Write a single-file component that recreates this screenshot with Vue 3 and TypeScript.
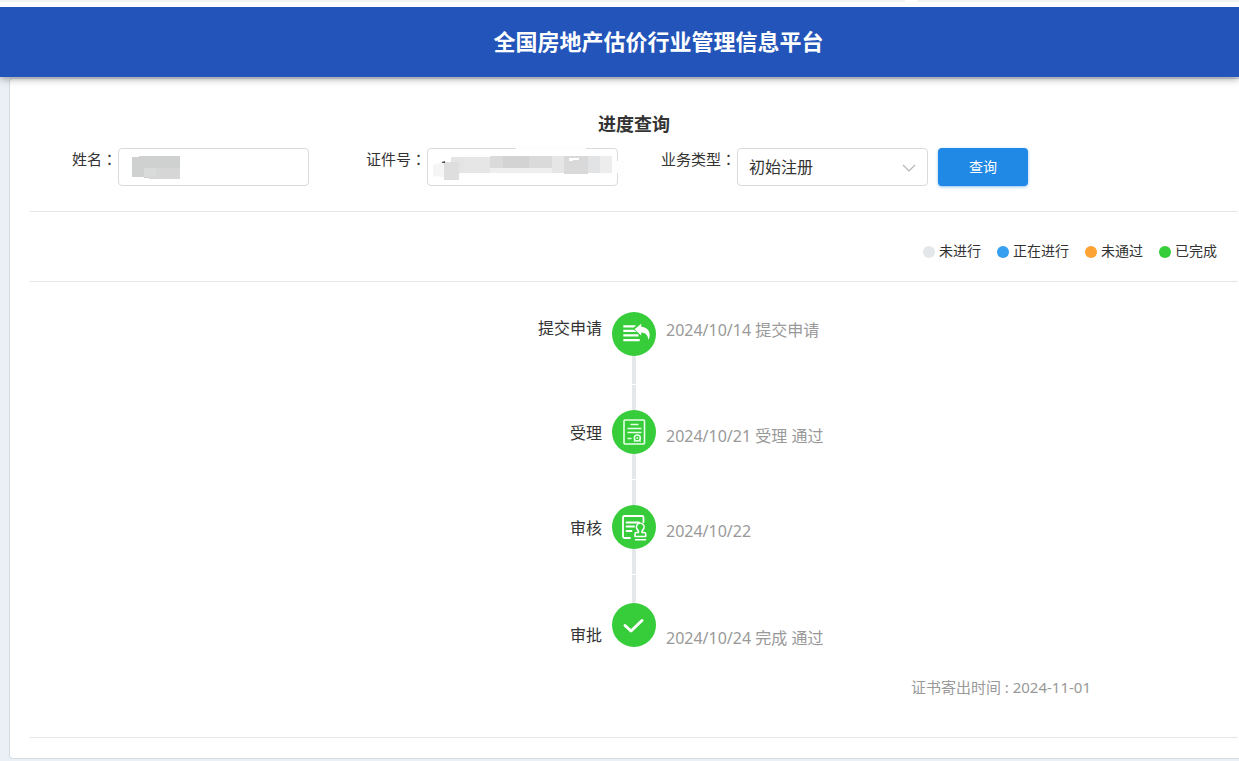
<script setup lang="ts">
import { ref } from 'vue'

interface Step {
  label: string
  result: string
  icon: 'submit' | 'accept' | 'review' | 'approve'
}

const businessType = ref('初始注册')

const legend = [
  { text: '未进行', kind: 'idle' },
  { text: '正在进行', kind: 'active' },
  { text: '未通过', kind: 'failed' },
  { text: '已完成', kind: 'done' },
]

const steps: Step[] = [
  { label: '提交申请', result: '2024/10/14 提交申请', icon: 'submit' },
  { label: '受理', result: '2024/10/21 受理 通过', icon: 'accept' },
  { label: '审核', result: '2024/10/22', icon: 'review' },
  { label: '审批', result: '2024/10/24 完成 通过', icon: 'approve' },
]
</script>

<template>
  <div class="page">
    <div class="strip"><span class="strip-main"></span><span class="strip-rest"></span></div>
    <header class="banner">
      <div class="banner-title">全国房地产估价行业管理信息平台</div>
    </header>

    <main class="card">
      <h1 class="title">进度查询</h1>

      <form class="query" @submit.prevent>
        <div class="field">
          <label for="name">姓名<span class="colon">：</span></label>
          <div class="control">
            <input id="name" type="text" autocomplete="off" />
            <svg class="mask" viewBox="0 0 191 38" aria-hidden="true">
              <path d="M14 9h7V8h41v23H31v-1h-5v-1H14z" fill="#cfd0d0" />
              <path d="M38 20h24v11H31v-2h7z" fill="#d6d6d6" />
              <path d="M26 20h12v9H26z" fill="#d9dada" />
            </svg>
          </div>
        </div>
        <div class="field">
          <label for="idno">证件号<span class="colon">：</span></label>
          <div class="control">
            <input id="idno" type="text" autocomplete="off" />
            <svg class="mask" viewBox="0 0 191 38" aria-hidden="true">
              <path d="M89-2h70v5H89zM184 13h14v12h-14z" fill="#fefefe" />
              <path d="M6 17l11-3v15l-11-1z" fill="#f5f5f5" />
              <path d="M24 9h39v16H32v7H17V14h7z" fill="#e4e4e4" />
              <path d="M17 14h15v18H17z" fill="#dedede" />
              <path d="M37 9h26v16H37z" fill="#e6e6e6" />
              <path d="M63 8h62v12H63z" fill="#dadada" />
              <path d="M76 8h26v12H76z" fill="#d3d3d3" />
              <path d="M63 20h62v5H63z" fill="#eeeeee" />
              <path d="M125 8h12v17h-12z" fill="#e6e6e6" />
              <path d="M137 8h24v18h-24z" fill="#d9d9d9" />
              <path d="M161 8h12v17h-12z" fill="#e1e3e5" />
              <path d="M173 8h12v17h-12z" fill="#ededed" />
              <path d="M142 10h10v2h-6v1h-4z" fill="#ffffff" />
              <path d="M15 14l3-1v2h-3z" fill="#4b4b4b" />
            </svg>
          </div>
        </div>
        <div class="field">
          <label for="type">业务类型<span class="colon">：</span></label>
          <div class="control">
            <select id="type" v-model="businessType">
              <option>初始注册</option>
            </select>
            <svg class="chevron" viewBox="0 0 14 8" aria-hidden="true">
              <path d="M1 1l6 6 6-6" fill="none" stroke="#b3b6bb" stroke-width="1.2" />
            </svg>
          </div>
        </div>
        <button class="search" type="submit">查询</button>
      </form>

      <ul class="legend">
        <li v-for="item in legend" :key="item.kind">
          <span class="dot" :class="item.kind"></span>{{ item.text }}
        </li>
      </ul>

      <section class="progress">
        <ol class="timeline">
          <li v-for="step in steps" :key="step.icon" class="step" :class="step.icon">
            <span class="step-label">{{ step.label }}</span>
            <span class="track">
              <span class="node">
                <svg viewBox="0 0 44 44" aria-hidden="true">
                  <g v-if="step.icon === 'submit'" fill="#fff">
                    <path d="M11.300 13.200h12.700l-2 2.300H11.300zM11.300 17.700h10.200l3.500 2.300H11.300zM11.300 22.300h15.200v2.300H11.300zM11.300 26.900h16.400v2.400H11.300z" />
                    <path d="M22.500 17.200l6.700-5.400v3c5 .2 8.500 3.500 8.500 8.200 0 1.900-.5 3.400-1.500 4.800-.2-4.700-2.700-7-7-7.200v3z" />
                  </g>
                  <g v-else-if="step.icon === 'accept'" fill="none" stroke="#e9ffe9" stroke-width="1.600">
                    <rect x="12" y="10" width="20.500" height="24" rx="1" />
                    <path d="M18.500 14.500h8M15.500 18.500h14M15.500 22.500h14M15.500 28.500h4" />
                    <circle cx="25.300" cy="28" r="3" />
                    <circle cx="25.300" cy="28" r="1" fill="#e9ffe9" stroke="none" />
                    <path d="M23 30.500l-1 1.200M27.600 30.500l1 1.200" stroke-width="1.200" />
                  </g>
                  <g v-else-if="step.icon === 'review'" fill="none" stroke="#fff" stroke-width="1.800" stroke-linecap="round" stroke-linejoin="round">
                    <path d="M31.500 17v-4.500a1.500 1.500 0 0 0-1.500-1.500H12.500a1.500 1.500 0 0 0-1.500 1.500v19a1.500 1.500 0 0 0 1.500 1.500H18" />
                    <path d="M14.500 17.500h12.500M14.500 21.500h7.500M14.500 26h5" />
                    <path d="M26.500 27.500c.2-1.300-.2-2-1-2.900a3.800 3.800 0 1 1 5.500 0c-.9.900-1.200 1.700-1 2.900h2.200a1.500 1.500 0 0 1 1.500 1.500v2.500H23v-2.500a1.500 1.500 0 0 1 1.500-1.500zM23.500 34.800h10" stroke-width="1.600" />
                  </g>
                  <path v-else d="M13 22.500l6 5.500L30 17.500" fill="none" stroke="#fff" stroke-width="3" stroke-linecap="round" stroke-linejoin="round" />
                </svg>
              </span>
            </span>
            <span class="step-result">{{ step.result }}</span>
          </li>
        </ol>
        <p class="sent">证书寄出时间 : 2024-11-01</p>
      </section>
    </main>
  </div>
</template>

<style>
body {
  margin: 0;
  background: #eaf0f6;
}
</style>

<style scoped>
.page {
  font-family: "Noto Sans", "Noto Sans CJK SC", sans-serif;
  font-size: 16px;
  color: #333;
  padding-bottom: 2px;
}
.strip {
  position: relative;
  z-index: 2;
  display: flex;
  gap: 12px;
  height: 7px;
  background: #fff;
}
.strip span {
  height: 2px;
  background: #f2f3f4;
}
.strip-main {
  flex: 905;
}
.strip-rest {
  flex: 322;
}
.banner {
  position: relative;
  z-index: 1;
  display: flex;
  align-items: center;
  justify-content: center;
  box-sizing: border-box;
  height: 70px;
  padding: 0 0 2px 78px;
  background: #2254ba;
  box-shadow: 0 1px 8px rgba(0, 0, 0, 0.45);
}
.banner-title {
  color: #fff;
  font-size: 22px;
  font-weight: 700;
  line-height: 32px;
}
.card {
  margin: 1px 0 0 9px;
  padding: 31px 1px 20px 20px;
  background: #fff;
  border: 1px solid #d5dde0;
  border-right: 0;
  border-radius: 4px 0 0 4px;
}
.title {
  margin: 0;
  font-size: 18px;
  font-weight: 700;
  line-height: 28px;
  text-align: center;
}
.query {
  display: grid;
  grid-template-columns: 279px 309px 310px auto;
  justify-content: start;
  padding: 10px 0 25px;
  border-bottom: 1px solid #e4e7e9;
}
.field {
  display: flex;
  justify-content: flex-end;
}
.field label {
  padding-right: 1px;
  font-size: 15px;
  line-height: 22px;
  white-space: nowrap;
}
.colon {
  font-family: "Noto Sans CJK TC", sans-serif;
}
.control {
  position: relative;
  width: 191px;
  height: 38px;
}
.control input,
.control select {
  box-sizing: border-box;
  width: 100%;
  height: 100%;
  margin: 0;
  padding: 0 11px;
  border: 1px solid #d9dadc;
  border-radius: 4px;
  background: #fff;
  color: #333;
  font-family: inherit;
  font-size: 16px;
  appearance: none;
}
.mask {
  position: absolute;
  inset: 0;
  overflow: visible;
  pointer-events: none;
}
.chevron {
  position: absolute;
  top: 16px;
  right: 12px;
  width: 14px;
  height: 8px;
  pointer-events: none;
}
.search {
  width: 90px;
  height: 38px;
  margin-left: 10px;
  padding: 0 0 2px;
  border: 0;
  border-radius: 4px;
  background: #2088e5;
  box-shadow: 0 1px 3px rgba(32, 136, 229, 0.5);
  color: #fff;
  font-family: inherit;
  font-size: 14px;
}
.legend {
  display: flex;
  justify-content: flex-end;
  gap: 16px;
  margin: 0;
  padding: 27px 21px 18px;
  border-bottom: 1px solid #e4e7e9;
  list-style: none;
  font-size: 14px;
  line-height: 24px;
}
.legend li {
  display: flex;
  align-items: center;
  gap: 4px;
}
.dot {
  width: 12px;
  height: 12px;
  margin-top: 1px;
  border-radius: 50%;
}
.idle { background: #e4e7e9; }
.active { background: #369ff0; }
.failed { background: #fda235; }
.done { background: #36cc3a; }
.progress {
  padding: 30px 0 38px;
  border-bottom: 1px solid #e4e7e9;
}
.timeline {
  margin: 0;
  padding: 0;
  list-style: none;
}
.step {
  display: grid;
  grid-template-columns: 1fr 44px 1fr;
  column-gap: 10px;
  line-height: 24px;
}
.step-label {
  text-align: right;
}
.step-result {
  color: #999;
}
.track {
  display: flex;
  flex-direction: column;
  align-items: center;
  padding-bottom: 1px;
}
.track::before,
.track::after {
  content: "";
  flex: 1;
  width: 4px;
  background: #e5e8eb;
}
.submit .track::before,
.approve .track::after {
  display: none;
}
.approve .track::before {
  flex: 0 0 28px;
}
.node,
.node svg {
  display: block;
  width: 44px;
  height: 44px;
}
.node {
  border-radius: 50%;
  background: #36cc3a;
}
.submit { height: 73px; }
.accept,
.review { height: 95px; }
.approve { height: 73px; }
.submit .step-label { padding-top: 4px; }
.submit .step-result { padding-top: 6px; }
.accept .step-label,
.review .step-label { padding-top: 36px; }
.accept .step-result,
.review .step-result { padding-top: 39px; }
.approve .step-label { padding-top: 48px; }
.approve .step-result { padding-top: 51px; }
.sent {
  margin: 27px 147px 0 0;
  color: #999;
  font-size: 15px;
  line-height: 24px;
  text-align: right;
}
</style>
